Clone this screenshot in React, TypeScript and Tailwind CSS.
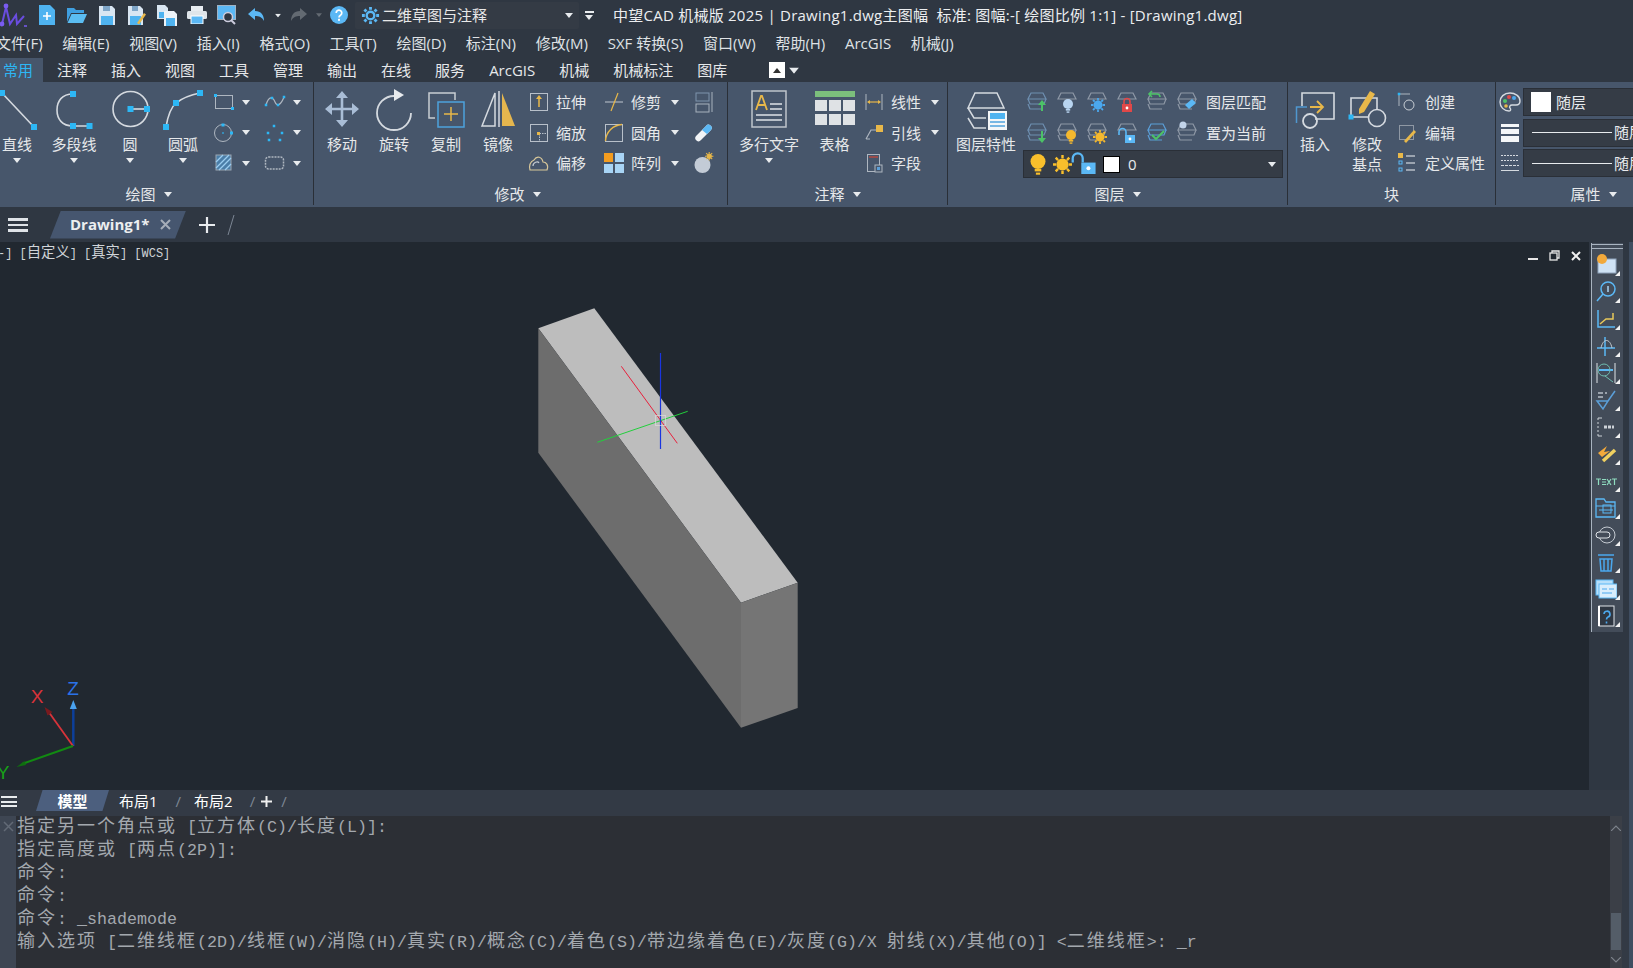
import type { ReactNode } from "react";

const uiFont = { fontFamily: '"Open Sans","Noto Sans CJK SC",sans-serif' };

const menus = ["文件(F)", "编辑(E)", "视图(V)", "插入(I)", "格式(O)", "工具(T)", "绘图(D)", "标注(N)", "修改(M)", "SXF 转换(S)", "窗口(W)", "帮助(H)", "ArcGIS", "机械(J)"];
const tabs = ["注释", "插入", "视图", "工具", "管理", "输出", "在线", "服务", "ArcGIS", "机械", "机械标注", "图库"];

const cmdLines = [
  "指定另一个角点或 [立方体(C)/长度(L)]:",
  "指定高度或 [两点(2P)]:",
  "命令:",
  "命令:",
  "命令: _shademode",
  "输入选项 [二维线框(2D)/线框(W)/消隐(H)/真实(R)/概念(C)/着色(S)/带边缘着色(E)/灰度(G)/X 射线(X)/其他(O)] <二维线框>: _r",
];

const BLUE = "#2db7f5";
const LINE = "#d5dae0";

function Mixed({ text, cjk }: { text: string; cjk: string }) {
  // CJK runs need their own size, the latin part stays on the mono grid
  return (
    <>
      {text.split(/([\u4e00-\u9fff]+)/).map((part, i) =>
        /[\u4e00-\u9fff]/.test(part) ? (
          <span key={i} className={cjk} style={{ fontFamily: '"Noto Sans CJK SC",sans-serif' }}>
            {part}
          </span>
        ) : (
          <span key={i}>{part}</span>
        )
      )}
    </>
  );
}

function Caret({ className = "" }: { className?: string }) {
  return (
    <svg width="8" height="5" viewBox="0 0 8 5" className={"shrink-0 " + className}>
      <path d="M0 0h8L4 5z" fill="#e8ebee" />
    </svg>
  );
}

function Sq({ x, y, s = 6 }: { x: number; y: number; s?: number }) {
  return <rect x={x - s / 2} y={y - s / 2} width={s} height={s} fill={BLUE} />;
}

function Ico({ size = 40, children }: { size?: number; children: ReactNode }) {
  return (
    <svg width={size} height={size} viewBox={`0 0 ${size} ${size}`} fill="none" className="shrink-0 overflow-visible">
      {children}
    </svg>
  );
}

function Panel({ className, label, labelClass = "", caret = true, children }: { className: string; label: string; labelClass?: string; caret?: boolean; children: ReactNode }) {
  return (
    <div className={"flex flex-col shrink-0 h-[123px] overflow-hidden " + className}>
      <div className="flex h-[101px]">{children}</div>
      <div className={"flex h-[22px] items-center justify-center gap-[8px] text-[15px] text-[#e6e8ea] " + labelClass}>
        <span>{label}</span>
        {caret && <Caret />}
      </div>
    </div>
  );
}

function Large({ className, icon, label, caret = true, second }: { className: string; icon: ReactNode; label: string; caret?: boolean; second?: string }) {
  return (
    <div className={"flex flex-col items-center shrink-0 text-[15px] text-[#e6e8ea] " + className}>
      <div className="h-[54px] flex items-center justify-center">{icon}</div>
      <div className="-mt-px h-[20px] leading-[19px] whitespace-nowrap">{label}</div>
      {second && <div className="h-[19px] leading-[19px] whitespace-nowrap">{second}</div>}
      {caret && <Caret className="mt-[3px]" />}
    </div>
  );
}

function Rows({ className = "", children }: { className?: string; children: ReactNode }) {
  return <div className={"flex flex-col pt-[5px] shrink-0 " + className}>{children}</div>;
}

function Small({ icon, label, caret, labelClass = "ml-[2px]" }: { icon: ReactNode; label?: string; caret?: boolean; labelClass?: string }) {
  return (
    <div className="flex h-[30.5px] items-center text-[15px] text-[#e6e8ea] whitespace-nowrap">
      <div className="flex w-[30px] justify-center">{icon}</div>
      {label && <span className={labelClass}>{label}</span>}
      {caret && <Caret className="ml-[10px]" />}
    </div>
  );
}

function DrawCell({ icon }: { icon: ReactNode }) {
  return (
    <div className="flex h-[30.5px] w-[51px] items-center">
      <div className="flex w-[28px] justify-center">{icon}</div>
      <div className="flex w-[16px] justify-center">
        <Caret />
      </div>
    </div>
  );
}

function Layers({ color = "#8e98a6", top = false }: { color?: string; top?: boolean }) {
  return (
    <g stroke={color} strokeWidth="1.2" fill="none">
      <path d="M5 2h12l3 6H2z" />
      {!top && <path d="M2 8l2 5h14l2-5M2 13l2 5h12" />}
    </g>
  );
}

function Mini({ children }: { children: ReactNode }) {
  return (
    <svg width="22" height="22" viewBox="0 0 22 22" fill="none" className="shrink-0 overflow-visible">
      {children}
    </svg>
  );
}

function Bulb({ color, s = 1 }: { color: string; s?: number }) {
  return (
    <g transform={`scale(${s})`}>
      <circle cx="5" cy="5" r="5" fill={color} />
      <rect x="2.8" y="10" width="4.4" height="1.6" fill={color} />
      <rect x="3.6" y="12.4" width="2.8" height="1.4" fill={color} />
    </g>
  );
}

function Sun({ color }: { color: string }) {
  return (
    <g stroke={color} strokeWidth="1.8">
      <circle cx="7" cy="7" r="3.6" fill={color} />
      <path d="M7 0v2.4M7 11.6V14M0 7h2.4M11.6 7H14M2 2l1.7 1.7M10.3 10.3L12 12M12 2l-1.7 1.7M3.7 10.3L2 12" />
    </g>
  );
}

function Lock({ color, open = false }: { color: string; open?: boolean }) {
  return (
    <g>
      <rect x="1" y="6" width="10" height="8" fill={color} />
      <path d={open ? "M-5 6V3a3.5 3.5 0 0 1 7 0v3" : "M3 6V3.5a3 3 0 0 1 6 0V6"} stroke={color} strokeWidth="1.6" fill="none" />
      <circle cx="6" cy="10" r="1.4" fill="#fff" />
    </g>
  );
}

function Side({ children }: { children: ReactNode }) {
  return (
    <div className="relative flex h-[27px] w-full items-center justify-center pr-[3px]">
      <svg width="22" height="22" viewBox="0 0 22 22" fill="none">
        {children}
      </svg>
      <svg width="5" height="5" viewBox="0 0 5 5" className="absolute bottom-[2px] right-[3px]">
        <path d="M5 0v5H0z" fill="#f2f2f2" />
      </svg>
    </div>
  );
}

function QuickBar() {
  return (
    <div className="flex shrink-0 items-center">
      <div className="w-[32px] h-[30px] flex items-center">
        <svg width="30" height="28" viewBox="0 0 30 28" fill="none" className="-ml-[1px]">
          <path d="M3 23L7 6l4 17 6-9 1 9 7-8" stroke="#6a4de0" strokeWidth="2" />
          <circle cx="7" cy="5" r="2.4" fill="#7a5cf0" />
          <circle cx="3" cy="23" r="2.4" fill="#7a5cf0" />
          <path d="M25 25h3" stroke="#7a5cf0" strokeWidth="1.5" />
        </svg>
      </div>
      <div className="flex w-[30px] justify-center">
        <svg width="16" height="20" viewBox="0 0 16 20"><path d="M0 0h11l5 5v15H0z" fill="#4fb3f0" /><path d="M8 7v8M4 11h8" stroke="#fff" strokeWidth="1.6" /></svg>
      </div>
      <div className="flex w-[30px] justify-center">
        <svg width="20" height="18" viewBox="0 0 20 18"><path d="M0 2h7l2 2h8v3H4L0 16z" fill="#3f9fe0" /><path d="M4.5 8H20l-4 9H0.5z" fill="#5bbdf2" /></svg>
      </div>
      <div className="flex w-[30px] justify-center">
        <svg width="16" height="19" viewBox="0 0 16 19"><path d="M0 0h13l3 3v16H0z" fill="#d9e6f2" /><rect x="2" y="10" width="12" height="9" fill="#4fb3f0" /><rect x="4" y="0" width="7" height="5" fill="#7fa6c8" /></svg>
      </div>
      <div className="flex w-[30px] justify-center">
        <svg width="18" height="20" viewBox="0 0 18 20"><path d="M0 1h12l3 3v16H0z" fill="#d9e6f2" /><rect x="2" y="11" width="11" height="9" fill="#4fb3f0" /><rect x="4" y="1" width="6" height="5" fill="#7fa6c8" /><path d="M9 18l7-10 2 1.500-7 10z" fill="#e8b84a" /></svg>
      </div>
      <div className="flex w-[30px] justify-center">
        <svg width="20" height="21" viewBox="0 0 20 21"><path d="M0 0h8l3 3v11H0z" fill="#d9e6f2" /><rect x="2" y="7" width="7" height="6" fill="#4fb3f0" /><path d="M7 6h10l3 3v12H7z" fill="#eef3f8" /><rect x="9" y="13" width="9" height="8" fill="#4fb3f0" /></svg>
      </div>
      <div className="flex w-[30px] justify-center">
        <svg width="20" height="18" viewBox="0 0 20 18"><rect x="4" y="0" width="12" height="5" fill="#e8edf2" /><rect x="0" y="5" width="20" height="8" rx="1.500" fill="#dfe5ea" /><rect x="4" y="10" width="12" height="8" fill="#5bb8f5" stroke="#fff" /></svg>
      </div>
      <div className="flex w-[30px] justify-center">
        <svg width="20" height="20" viewBox="0 0 20 20" fill="none"><rect x="0.500" y="0.500" width="18" height="14" fill="#5bb8f5" stroke="#9fb2c4" /><circle cx="11" cy="12" r="4.500" fill="#2f3742" stroke="#ccd" strokeWidth="1.500" /><path d="M14 15l4 4" stroke="#ccd" strokeWidth="2" /></svg>
      </div>
      <div className="flex w-[30px] justify-center">
        <svg width="18" height="14" viewBox="0 0 18 14" fill="none"><path d="M7 0L0 6l7 6V8c4 0 7 1 9 5 0-6-3-10-9-10z" fill="#5bb8f5" /></svg>
      </div>
      <div className="flex w-[12px] justify-center"><Caret className="scale-75" /></div>
      <div className="flex w-[28px] justify-center">
        <svg width="18" height="14" viewBox="0 0 18 14"><path d="M11 0l7 6-7 6V8C7 8 4 9 2 13 2 7 5 3 11 3z" fill="#636a72" /></svg>
      </div>
      <div className="flex w-[14px] justify-center">
        <svg width="6" height="4" viewBox="0 0 8 5"><path d="M0 0h8L4 5z" fill="#636a72" /></svg>
      </div>
      <div className="flex w-[26px] justify-center">
        <svg width="18" height="18" viewBox="0 0 18 18"><circle cx="9" cy="9" r="9" fill="#5bb8f5" /><path d="M6.200 7a2.800 2.800 0 1 1 4.300 2.300C9.400 10 9 10.500 9 11.500" stroke="#fff" strokeWidth="1.700" fill="none" /><rect x="8" y="12.800" width="2" height="2" fill="#fff" /></svg>
      </div>
      <div className="ml-[3px] flex h-[27px] w-[224px] items-center rounded-[2px] bg-[#343b45] pl-[6px] text-[15px] text-[#e8e8e8]">
        <svg width="19" height="19" viewBox="0 0 20 20" fill="none" stroke="#5bb8f5" className="shrink-0">
          <circle cx="10" cy="10" r="4" strokeWidth="2.500" />
          <path d="M10 1v3M10 16v3M1 10h3M16 10h3M3.600 3.600l2.100 2.100M14.300 14.300l2.100 2.100M16.400 3.600l-2.100 2.100M5.700 14.300l-2.100 2.100" strokeWidth="3" />
        </svg>
        <span className="ml-[2px] whitespace-nowrap">二维草图与注释</span>
        <Caret className="ml-auto mr-[6px]" />
      </div>
      <div className="flex w-[20px] flex-col items-center gap-[2px]">
        <div className="h-[2px] w-[9px] bg-[#e8ebee]" />
        <Caret />
      </div>
    </div>
  );
}

function DrawPanel() {
  return (
    <Panel className="w-[314px] border-r border-[#2a2f37]" label="绘图" labelClass="pr-[16px]">
      <Large className="w-[54px] -ml-[10px]" label="直线" icon={
        <Ico>
          <path d="M5 4L37 38" stroke={LINE} strokeWidth="1.600" />
          <Sq x={5} y={4} /><Sq x={37} y={38} />
        </Ico>
      } />
      <Large className="w-[60px]" label="多段线" icon={
        <Ico>
          <path d="M19 5C8 5 3 12 3 21C3 30 8 37 19 37H35" stroke={LINE} strokeWidth="1.600" />
          <Sq x={19} y={5} /><Sq x={19} y={37} /><Sq x={35.5} y={37} />
        </Ico>
      } />
      <Large className="w-[52px]" label="圆" icon={
        <Ico>
          <circle cx="20.500" cy="20" r="17.500" stroke={LINE} strokeWidth="1.600" />
          <path d="M20 20H37" stroke={LINE} strokeWidth="1.600" />
          <Sq x={20.5} y={20} /><Sq x={37} y={20} />
        </Ico>
      } />
      <Large className="w-[54px]" label="圆弧" icon={
        <Ico>
          <path d="M3 38Q6 20 13 14Q22 7 37 4" stroke={LINE} strokeWidth="1.600" />
          <Sq x={3} y={38} /><Sq x={13} y={14} /><Sq x={37} y={4} />
        </Ico>
      } />
      <Rows>
        <DrawCell icon={<Mini><rect x="2.500" y="4.500" width="17" height="13" stroke="#aeb6c0" /><Sq x={2.5} y={4.5} s={3} /><Sq x={19.5} y={17.5} s={3} /></Mini>} />
        <DrawCell icon={<Mini><circle cx="10" cy="11" r="8.500" stroke="#aeb6c0" /><Sq x={10} y={3} s={3} /><Sq x={18.5} y={11} s={3} /><Sq x={10} y={11} s={1.5} /></Mini>} />
        <DrawCell icon={<Mini><rect x="3" y="3" width="15" height="15" fill="#4b7ea8" stroke="#9aa5b2" /><path d="M3 10L10 3M3 16L16 3M6 18L18 6M12 18l6-6" stroke="#9ccdf0" strokeWidth="1.300" /></Mini>} />
      </Rows>
      <Rows>
        <DrawCell icon={<Mini><path d="M2 14C5 4 9 6 11 11C13 16 17 14 20 6" stroke="#aeb6c0" strokeWidth="1.200" /><Sq x={2} y={14} s={2.5} /><Sq x={8} y={7} s={2.5} /><Sq x={14} y={14} s={2.5} /><Sq x={20} y={6} s={2.5} /></Mini>} />
        <DrawCell icon={<Mini><Sq x={10} y={4} s={2.5} /><Sq x={4} y={11} s={2.5} /><Sq x={18} y={11} s={2.5} /><Sq x={5} y={18} s={2.5} /><Sq x={16} y={18} s={2.5} /></Mini>} />
        <DrawCell icon={<Mini><rect x="1.500" y="5" width="18" height="12" rx="3" stroke="#aeb6c0" strokeWidth="1.500" strokeDasharray="2 1" /></Mini>} />
      </Rows>
    </Panel>
  );
}

function ModifyPanel() {
  return (
    <Panel className="w-[414px] border-r border-[#2a2f37]" label="修改" labelClass="pr-[6px]">
      <Large className="w-[52px] ml-[2px]" caret={false} label="移动" icon={
        <Ico>
          <path d="M20 8V32M8 20H32" stroke="#a9bdd6" strokeWidth="2.600" />
          <path d="M20 2l6 7H14zM20 38l6-7H14zM3 20l7-6v12zM37 20l-7-6v12z" fill="#a9bdd6" />
        </Ico>
      } />
      <Large className="w-[52px]" caret={false} label="旋转" icon={
        <Ico>
          <path d="M20 7A17 17 0 1 0 37 24" stroke={LINE} strokeWidth="1.800" />
          <path d="M20 0L30 6L20 12z" fill="#e8ebee" />
        </Ico>
      } />
      <Large className="w-[52px]" caret={false} label="复制" icon={
        <Ico>
          <path d="M9 29H3V4H29V11" stroke="#c9ced4" strokeWidth="1.500" />
          <rect x="12" y="13" width="26" height="25" stroke="#4da3dd" strokeWidth="1.500" />
          <path d="M25 18V32M18 25H32" stroke="#e8b84a" strokeWidth="1.500" />
        </Ico>
      } />
      <Large className="w-[52px]" caret={false} label="镜像" icon={
        <Ico>
          <path d="M17 4L4 37H17z" stroke={LINE} strokeWidth="1.500" />
          <path d="M21 2V38" stroke={LINE} strokeWidth="1.500" />
          <path d="M24 4L37 37H24z" fill="#e5b64e" />
        </Ico>
      } />
      <Rows className="w-[75px]">
        <Small label="拉伸" icon={<Mini><rect x="2.500" y="2.500" width="17" height="17" stroke="#b8c0ca" /><path d="M11 6V16" stroke="#e8b84a" strokeWidth="1.500" /><path d="M11 4l3 4H8z" fill="#e8b84a" /></Mini>} />
        <Small label="缩放" icon={<Mini><rect x="2.500" y="2.500" width="17" height="17" stroke="#b8c0ca" /><rect x="11.500" y="11.500" width="8" height="8" stroke="#b8c0ca" strokeDasharray="1.500 1" /><rect x="9" y="10" width="3" height="3" fill="#e8b84a" /></Mini>} />
        <Small label="偏移" icon={<Mini><path d="M2 18H19C21 13 18 10 15 10C14 5 9 3 6 8C2 10 1 14 2 18z" stroke="#d8c79a" strokeWidth="1.200" /><path d="M5 14C5 10 10 9 11 11" stroke="#c5cbd2" strokeWidth="1.200" /></Mini>} />
      </Rows>
      <Rows className="w-[90px]">
        <Small label="修剪" caret icon={<Mini><path d="M2 11H20" stroke="#aeb6c0" strokeWidth="1.200" /><path d="M15 2L8 20" stroke="#e8b84a" strokeWidth="1.200" /></Mini>} />
        <Small label="圆角" caret icon={<Mini><rect x="2.500" y="2.500" width="17" height="17" stroke="#b8c0ca" /><path d="M2.500 19C3 10 10 3 19 2.500" stroke="#e8b84a" strokeWidth="1.400" /></Mini>} />
        <Small label="阵列" caret icon={<Mini><rect x="1" y="1" width="9" height="9" fill="#f39c1f" /><rect x="12" y="1" width="9" height="9" fill="#a8d4f5" /><rect x="1" y="12" width="9" height="9" fill="#a8d4f5" /><rect x="12" y="12" width="9" height="9" fill="#a8d4f5" /></Mini>} />
      </Rows>
      <Rows className="w-[30px]">
        <Small icon={<Mini><rect x="3" y="2" width="13" height="8" stroke="#7f94ad" /><rect x="3" y="13" width="13" height="8" stroke="#a8b2be" /><path d="M19 1V21" stroke="#a8b2be" /></Mini>} />
        <Small icon={<Mini><path d="M3 14L13 4a3 3 0 0 1 5 4L8 18a3 3 0 0 1-5-4z" fill="#f2f4f6" /><path d="M9 8L13 4a3 3 0 0 1 5 4L14 12z" fill="#5bb8f5" /></Mini>} />
        <Small icon={<Mini><circle cx="9.500" cy="13" r="8" fill="#c3cbd6" /><g transform="translate(12 0) scale(.6)"><Sun color="#e8b84a" /></g></Mini>} />
      </Rows>
    </Panel>
  );
}

function AnnotatePanel() {
  return (
    <Panel className="w-[220px] border-r border-[#2a2f37]" label="注释">
      <Large className="w-[82px]" label="多行文字" icon={
        <Ico>
          <rect x="3" y="2" width="34" height="36" stroke="#bfc5cc" strokeWidth="1.500" />
          <path d="M7 21L12 7h1l5 14M9 16h7" stroke="#e8b84a" strokeWidth="1.800" />
          <path d="M21 15h12M21 20h12M7 26h26M7 31h26" stroke="#b8bfc8" strokeWidth="1.800" />
        </Ico>
      } />
      <Large className="w-[49px]" caret={false} label="表格" icon={
        <Ico>
          <rect x="0" y="2" width="40" height="6" fill="#7cbf7c" />
          <path d="M0 11h12v11H0zM14 11h12v11H14zM28 11h12v11H28zM0 25h12v11H0zM14 25h12v11H14zM28 25h12v11H28z" fill="#dfe2e5" />
        </Ico>
      } />
      <Rows>
        <Small label="线性" caret icon={<Mini><path d="M3 3V19M19 3V19" stroke="#aeb6c0" /><path d="M5 11H17" stroke="#e8b84a" strokeWidth="1.200" /><path d="M4 11l3-2v4zM18 11l-3-2v4z" fill="#e8b84a" /></Mini>} />
        <Small label="引线" caret icon={<Mini><path d="M3 17L8 8H13M3 17H7" stroke="#aeb6c0" strokeWidth="1.200" /><rect x="13" y="3" width="7" height="7" fill="#e8b84a" /></Mini>} />
        <Small label="字段" icon={<Mini><rect x="4.500" y="2.500" width="12" height="17" stroke="#aeb6c0" /><path d="M6 5h9" stroke="#b5483f" strokeWidth="1.500" /><rect x="12" y="13" width="7" height="7" fill="#47566b" stroke="#aeb6c0" /><rect x="14" y="15" width="3" height="3" fill="#5b9fd8" /></Mini>} />
      </Rows>
    </Panel>
  );
}

function LayerPanel() {
  const row1 = [
    <><Layers color="#6e8fb0" /><path d="M16 20V13" stroke="#4cc267" strokeWidth="2" /><path d="M16 9l4 5h-8z" fill="#4cc267" /></>,
    <><Layers top /><g transform="translate(7 8)"><Bulb color="#b8d4f0" /></g></>,
    <><Layers top /><g transform="translate(5 7)"><Sun color="#4ba8ee" /></g></>,
    <><Layers top /><g transform="translate(5 7)"><Lock color="#e04848" /></g></>,
    <><Layers /><path d="M6 0L3 3l3 3M3 3h8a3 3 0 0 1 3 3" stroke="#4cc267" strokeWidth="1.600" /></>,
    <><Layers /><path d="M9 14L16 8l4 4-7 6z" fill="#5bb8f5" /></>,
  ];
  const row2 = [
    <><Layers color="#6e8fb0" /><path d="M16 9V16" stroke="#4cc267" strokeWidth="2" /><path d="M16 21l4-5h-8z" fill="#4cc267" /></>,
    <><Layers /><g transform="translate(10 8)"><Bulb color="#f4b82e" /></g></>,
    <><Layers /><g transform="translate(7 8)"><Sun color="#f4b82e" /></g></>,
    <><Layers top /><g transform="translate(8 7)"><Lock color="#5bb8f5" open /></g></>,
    <><Layers color="#5b9fd8" /><path d="M6 13l4 4 8-8" stroke="#4cc267" strokeWidth="2" /></>,
    <><Layers /><circle cx="7" cy="3" r="3.500" fill="#c2d4ea" /></>,
  ];
  return (
    <Panel className="w-[340px] border-r border-[#2a2f37]" label="图层">
      <Large className="w-[76px]" caret={false} label="图层特性" icon={
        <Ico>
          <path d="M9 4H31L38 19H2zM2 19L8 29H20M2 29L8 39H20" stroke={LINE} strokeWidth="1.500" />
          <rect x="22" y="22" width="19" height="19" fill="#f4f6f8" />
          <rect x="24" y="24" width="15" height="6" fill="#4fb3f0" />
          <path d="M24 33h15M24 37h15" stroke="#4fa3dd" strokeWidth="1.400" />
        </Ico>
      } />
      <div className="-ml-[2px] flex flex-col pt-[5px]">
        {[row1, row2].map((row, r) => (
          <div key={r} className="flex h-[30.5px] items-center text-[15px] text-[#e6e8ea]">
            {row.map((ic, i) => (
              <div key={i} className="flex w-[30px] justify-center">
                <Mini>{ic}</Mini>
              </div>
            ))}
            <span className="ml-[4px] whitespace-nowrap">{r === 0 ? "图层匹配" : "置为当前"}</span>
          </div>
        ))}
        <div className="ml-[1px] mt-[2px] flex h-[28px] w-[260px] items-center border border-[#2a2f37] bg-[#353c46] text-[15px] text-[#e8ebee]">
          <svg width="16" height="21" viewBox="0 0 10 14" className="ml-[6px] shrink-0"><Bulb color="#f9bf2c" /></svg>
          <svg width="19" height="19" viewBox="0 0 14 14" className="ml-[7px] shrink-0 overflow-visible"><Sun color="#f9bf2c" /></svg>
          <svg width="20" height="20" viewBox="0 0 14 14" className="ml-[5px] shrink-0 overflow-visible"><g transform="translate(2 0)"><Lock color="#5bb8f5" open /></g></svg>
          <div className="ml-[6px] h-[17px] w-[17px] shrink-0 border border-black bg-white" />
          <span className="ml-[8px]">0</span>
          <Caret className="ml-auto mr-[6px]" />
        </div>
      </div>
    </Panel>
  );
}

function BlockPanel() {
  return (
    <Panel className="w-[208px] border-r border-[#2a2f37]" label="块" caret={false}>
      <Large className="w-[54px]" caret={false} label="插入" icon={
        <Ico>
          <path d="M7 17V4H39V30H20" stroke={LINE} strokeWidth="1.600" />
          <path d="M12 18H1.500V34" stroke="#4f97cf" strokeWidth="1.500" />
          <circle cx="15" cy="32" r="7" stroke={LINE} strokeWidth="1.800" />
          <path d="M15 18H27M22 12l6 6-6 6" stroke="#e8b84a" strokeWidth="1.800" />
        </Ico>
      } />
      <Large className="w-[50px]" caret={false} label="修改" second="基点" icon={
        <Ico>
          <path d="M4 9H30V28H4z" stroke={LINE} strokeWidth="1.600" />
          <circle cx="30" cy="29" r="8.500" stroke={LINE} strokeWidth="1.600" fill="#47566b" />
          <path d="M12 20L23 2l5 3-11 18-5 2z" fill="#e8b84a" />
          <Sq x={4} y={28} s={5} />
        </Ico>
      } />
      <Rows>
        <Small label="创建" labelClass="ml-[3px]" icon={<Mini><path d="M3 15V3H14" stroke="#aeb6c0" /><Sq x={3} y={3} s={2.5} /><circle cx="13" cy="14" r="5" stroke="#c8ced5" /></Mini>} />
        <Small label="编辑" labelClass="ml-[3px]" icon={<Mini><rect x="3.500" y="3.500" width="14" height="14" stroke="#8f98a4" /><path d="M8 19l10-11 2 2-10 11z" fill="#e8b84a" /></Mini>} />
        <Small label="定义属性" labelClass="ml-[3px]" icon={<Mini><rect x="2" y="1" width="5" height="5" fill="#e8b84a" /><rect x="3" y="9" width="3" height="3" stroke="#5bb8f5" /><rect x="3" y="16" width="3" height="3" stroke="#5bb8f5" /><path d="M10 4h9M10 11h9M10 18h9" stroke="#b8bfc8" strokeWidth="1.400" /></Mini>} />
      </Rows>
    </Panel>
  );
}

function PropsPanel() {
  return (
    <Panel className="w-[137px]" label="属性" labelClass="pl-[58px]">
      <div className="flex w-[27px] shrink-0 flex-col items-center gap-[12px] pt-[10px]">
        <svg width="22" height="20" viewBox="0 0 22 20" fill="none" className="shrink-0">
          <path d="M11 1C5 1 1 5 1 10s4 9 9 9c2 0 2-2 1-3s0-3 2-3h4c3 0 4-2 4-4C21 4 16 1 11 1z" stroke="#d5dae0" strokeWidth="1.400" />
          <circle cx="6" cy="9" r="2" fill="#4cc267" /><circle cx="10" cy="5" r="2" fill="#e04848" /><circle cx="15" cy="6" r="2" fill="#4ba8ee" /><circle cx="7" cy="14" r="1.800" fill="#e8b84a" />
        </svg>
        <svg width="18" height="18" viewBox="0 0 18 18" className="shrink-0"><path d="M0 0h18v3H0zM0 5h18v5H0zM0 12h18v6H0z" fill="#f4f6f8" /></svg>
        <svg width="18" height="18" viewBox="0 0 18 18" stroke="#d5dae0" strokeWidth="1" className="shrink-0"><path d="M0 1.500h18M0 6.500h18" strokeDasharray="2 1" /><path d="M0 11.500h18" strokeDasharray="3 1" /><path d="M0 16.500h18" /></svg>
      </div>
      <div className="flex shrink-0 flex-col gap-[2.500px] pt-[6px] text-[15px] text-[#e8ebee]">
        <div className="flex h-[28px] w-[130px] items-center border border-[#2a2f37] bg-[#353c46] pl-[7px]">
          <div className="h-[20px] w-[20px] shrink-0 bg-white" />
          <span className="ml-[5px]">随层</span>
        </div>
        {[0, 1].map((n) => (
          <div key={n} className="flex h-[28px] w-[130px] items-center border border-[#2a2f37] bg-[#353c46] pl-[8px]">
            <div className="h-px w-[80px] shrink-0 bg-[#e8ebee]" />
            <span className="ml-[2px] whitespace-nowrap">随层</span>
          </div>
        ))}
      </div>
    </Panel>
  );
}

function SideToolbar() {
  return (
    <div className="mt-px ml-[2px] flex h-[389px] w-[32px] flex-col border-l border-[#a9b4c0] bg-[#434c59]">
      <div className="mt-px h-[5px] w-[31px] border-y border-[#a9b4c0]" />
      <div className="h-[2px]" />
      <Side><rect x="3" y="5" width="18" height="14" fill="#cfe2f4" stroke="#8fa3bb" /><circle cx="7" cy="5" r="5" fill="#f2a93b" /></Side>
      <Side><circle cx="13" cy="8" r="7" stroke="#5bb8f5" strokeWidth="1.500" /><path d="M8 13L2 20" stroke="#5bb8f5" strokeWidth="1.500" /><path d="M13 5v6" stroke="#a8d4f5" strokeWidth="1.500" /></Side>
      <Side><path d="M3 2V19H20" stroke="#5bb8f5" strokeWidth="1.500" /><path d="M5 16l6-5h7V5" stroke="#e8c85a" strokeWidth="1.500" /></Side>
      <Side><path d="M2 13H20M10 2V21" stroke="#5bb8f5" strokeWidth="1.500" /><path d="M6 13C8 3 15 3 17 13" stroke="#c5cbd2" /></Side>
      <Side><path d="M2 1V21M20 1V21" stroke="#dfe3e8" /><path d="M4 8H18" stroke="#5bb8f5" strokeWidth="2" /><circle cx="9" cy="8" r="6" stroke="#6fbcb0" /><path d="M10 14l8 6" stroke="#6fbcb0" /></Side>
      <Side><path d="M2 12H13L8 20zM13 12L20 2" stroke="#5b9fd8" strokeWidth="1.500" /><path d="M3 4h5M3 8h5M10 4h2" stroke="#b8bfc8" strokeWidth="1.500" /></Side>
      <Side><path d="M3 2V20" stroke="#cdd2d8" strokeDasharray="2 2" /><path d="M3 2h4M3 20h4" stroke="#cdd2d8" /><path d="M9 11h10" stroke="#cdd2d8" strokeWidth="3" strokeDasharray="3 1" /></Side>
      <Side><path d="M3 10L12 3l-3 6 6-1-8 6z" fill="#f2a93b" /><path d="M8 18L20 7" stroke="#f0d060" strokeWidth="3.500" /></Side>
      <Side><path d="M1 9h5M3.500 9v6M7 12h4M7 9.500h4M7 14.500h4M12 9l4 6M16 9l-4 6M17 9h5M19.500 9v6" stroke="#8fdcc0" strokeWidth="1.200" /></Side>
      <Side><path d="M1 20V2H9l2 3H20V20z" stroke="#5bb8f5" strokeWidth="1.300" /><path d="M1 9H20M4 13H18" stroke="#5bb8f5" /><rect x="8" y="8" width="8" height="8" stroke="#5bb8f5" /></Side>
      <Side><circle cx="12" cy="11" r="8" stroke="#c5cbd2" /><rect x="1" y="8" width="14" height="6" rx="3" stroke="#dfe3e8" fill="#434c59" /></Side>
      <Side><path d="M3 4H19M5 8H17L16 20H6zM9 8V20M13 8V20" stroke="#4ba8ee" strokeWidth="1.500" /></Side>
      <Side><rect x="1" y="2" width="17" height="15" fill="#b8e0fa" stroke="#5bb8f5" /><rect x="4" y="6" width="18" height="14" fill="#d9eefc" stroke="#5bb8f5" /><path d="M7 11h5M14 11h5M7 15h10" stroke="#4ba8ee" /></Side>
      <Side><rect x="4" y="1" width="15" height="20" stroke="#dfe3e8" fill="#2f3742" /><path d="M4 1v20" stroke="#fff" strokeWidth="2" /><path d="M9 9a3 3 0 1 1 4 3c-1 .5-1.500 1-1.500 2.500M11.500 16.500v2" stroke="#4ba8ee" strokeWidth="1.600" /></Side>
    </div>
  );
}

function Viewport() {
  return (
    <div className="relative h-[548px] w-[1589px] shrink-0 overflow-hidden bg-[#212830]">
      <svg width="1589" height="548" viewBox="0 242 1589 548" className="absolute inset-0">
        <polygon points="538.3,328.3 594.3,308.3 797.7,582.7 741,602.7" fill="#bdbdbd" />
        <polygon points="538.3,328.3 741,602.7 741,727.7 538.3,452.7" fill="#6d6d6d" />
        <polygon points="741,602.7 797.7,582.7 797.7,708 741,727.7" fill="#757575" />
        <line x1="621.3" y1="366.3" x2="677.3" y2="443.3" stroke="#e8203c" />
        <line x1="597.3" y1="442.3" x2="687.7" y2="411.3" stroke="#22d03c" />
        <line x1="660.5" y1="353" x2="660.5" y2="449" stroke="#1a35e0" strokeWidth="1.200" />
        <rect x="655.5" y="415.500" width="10" height="10" fill="none" stroke="#dcdcdc" strokeOpacity="0.700" />
        <line x1="73.3" y1="746" x2="73.3" y2="706" stroke="#0d3f9a" strokeWidth="2.500" />
        <path d="M73.300 700l3.500 9h-7z" fill="#4aa3f0" />
        <line x1="73" y1="746" x2="48" y2="711" stroke="#d8333a" strokeWidth="1.800" />
        <path d="M44.500 707l8 5-5 3.500z" fill="#7a1a1e" />
        <line x1="73" y1="746" x2="22" y2="764" stroke="#128a12" strokeWidth="2" />
        <path d="M16.500 767l8-6 1.500 4z" fill="#0f6f0f" />
        <text x="73" y="695" textAnchor="middle" fontSize="19" fill="#2a72e8" fontFamily="Liberation Sans">Z</text>
        <text x="37" y="703" textAnchor="middle" fontSize="19" fill="#d8333a" fontFamily="Liberation Sans">X</text>
        <text x="3" y="779" textAnchor="middle" fontSize="19" fill="#18a018" fontFamily="Liberation Sans">Y</text>
      </svg>
      <div className="absolute left-[-2px] top-0 whitespace-pre text-[12px] leading-[18px] text-[#d0d4d8]" style={{ fontFamily: '"Liberation Mono",monospace' }}>
        <Mixed text="-] [自定义] [真实] [WCS]" cjk="text-[14.300px]" />
      </div>
      <div className="absolute right-[8px] top-[8px] flex items-center gap-[11px]">
        <div className="mt-[7px] h-[2px] w-[10px] bg-[#e6e6e6]" />
        <svg width="11" height="11" viewBox="0 0 11 11" fill="none" stroke="#e6e6e6" strokeWidth="1.300"><rect x="1" y="3" width="7" height="7" /><path d="M3 3V1h7v7H8" /></svg>
        <svg width="10" height="10" viewBox="0 0 10 10" stroke="#f0f0f0" strokeWidth="2"><path d="M1 1l8 8M9 1l-8 8" /></svg>
      </div>
    </div>
  );
}

function LayoutTabs() {
  return (
    <div className="flex h-[26px] items-start bg-[#333a45] text-[15px] leading-[22px] text-white">
      <div className="ml-[1px] mt-[6px] flex w-[16px] flex-col gap-[2.500px]">
        <div className="h-[2px] bg-[#e8ebee]" />
        <div className="h-[2px] bg-[#e8ebee]" />
        <div className="h-[2px] bg-[#e8ebee]" />
      </div>
      <div className="ml-[19px] flex h-[21px] w-[73px] items-center justify-center bg-[#4c5f7e] font-bold [clip-path:polygon(9%_0,100%_0,91%_100%,0_100%)]">模型</div>
      <span className="ml-[10px]">布局1</span>
      <span className="ml-[18px] text-[#7d8794]">/</span>
      <span className="ml-[13px]">布局2</span>
      <span className="ml-[17px] text-[#7d8794]">/</span>
      <svg width="11" height="11" viewBox="0 0 11 11" stroke="#f0f0f0" strokeWidth="2" className="ml-[6px] mt-[6px]"><path d="M5.500 0v11M0 5.500h11" /></svg>
      <span className="ml-[9px] text-[#7d8794]">/</span>
    </div>
  );
}

function CommandArea() {
  return (
    <div className="flex h-[152px] bg-[#2c2f35]">
      <div className="flex w-[16px] shrink-0 justify-center bg-[#3e4653] pt-[5px]">
        <svg width="11" height="11" viewBox="0 0 11 11" stroke="#626a76" strokeWidth="1.500"><path d="M1 1l9 9M10 1l-9 9" /></svg>
      </div>
      <div className="-mt-[3px] flex-1 overflow-hidden pl-px text-[16.670px] leading-[23px] text-[#a3a8ae]" style={{ fontFamily: '"Liberation Mono",monospace' }}>
        {cmdLines.map((line, i) => (
          <div key={i} className="h-[23px] whitespace-pre">
            <Mixed text={line} cjk="text-[18px] tracking-[2px]" />
          </div>
        ))}
      </div>
      <div className="relative w-[12px] shrink-0 bg-[#3b3f47]">
        <svg width="10" height="6" viewBox="0 0 10 6" fill="none" stroke="#7d838c" strokeWidth="1.200" className="absolute left-px top-[9px]"><path d="M0 6l5-5 5 5" /></svg>
        <div className="absolute left-px top-[97px] h-[37px] w-[10px] bg-[#545d68]" />
        <svg width="10" height="6" viewBox="0 0 10 6" fill="none" stroke="#7d838c" strokeWidth="1.200" className="absolute left-px top-[141px]"><path d="M0 0l5 5 5-5" /></svg>
      </div>
      <div className="w-[7px] shrink-0 bg-[#333a45]" />
    </div>
  );
}

export default function App() {
  return (
    <div className="h-[968px] w-[1633px] overflow-hidden bg-[#2f3742]" style={uiFont}>
      <div className="flex h-[30px] items-center">
        <QuickBar />
        <span className="ml-[14px] whitespace-nowrap text-[15px] tracking-[0.24px] text-[#eceef0]">中望CAD 机械版 2025 | Drawing1.dwg主图幅&nbsp; 标准: 图幅:-[ 绘图比例 1:1] - [Drawing1.dwg]</span>
      </div>
      <div className="-ml-[4px] flex h-[28px] items-center gap-[19.700px] pb-[2px] text-[15px] text-[#dfe2e5] whitespace-nowrap">
        {menus.map((m) => (
          <span key={m}>{m}</span>
        ))}
      </div>
      <div className="flex h-[24px] items-center text-[15px] text-[#e6e8ea] whitespace-nowrap">
        <div className="flex h-full w-[43px] items-center bg-[#47566b] pl-[3px] text-[#2db7f5]">常用</div>
        <div className="ml-[14px] flex gap-[24px]">
          {tabs.map((t) => (
            <span key={t}>{t}</span>
          ))}
        </div>
        <div className="ml-[42px] flex h-[16px] w-[16px] items-center justify-center bg-white">
          <svg width="8" height="5" viewBox="0 0 8 5"><path d="M0 5h8L4 0z" fill="#333" /></svg>
        </div>
        <Caret className="ml-[5px] scale-125" />
      </div>
      <div className="h-[125px] bg-[#47566b]">
        <div className="flex h-[123px]">
          <DrawPanel />
          <ModifyPanel />
          <AnnotatePanel />
          <LayerPanel />
          <BlockPanel />
          <PropsPanel />
        </div>
      </div>
      <div className="flex h-[35px] items-center">
        <div className="ml-[8px] flex w-[20px] flex-col gap-[3px]">
          <div className="h-[3px] bg-[#dfe3e8]" />
          <div className="h-[2px] bg-[#dfe3e8]" />
          <div className="h-[3px] bg-[#dfe3e8]" />
        </div>
        <div className="ml-[22px] flex h-[28px] w-[136px] items-center bg-[#46566f] pl-[20px] text-[15px] font-bold text-[#eceef0] [clip-path:polygon(8%_0,100%_0,92%_100%,0_100%)]">
          Drawing1*
          <svg width="11" height="11" viewBox="0 0 11 11" stroke="#a5adb8" strokeWidth="2" className="ml-[11px] shrink-0"><path d="M1 1l9 9M10 1l-9 9" /></svg>
        </div>
        <svg width="16" height="16" viewBox="0 0 16 16" stroke="#e8ebee" strokeWidth="2.200" className="ml-[13px]"><path d="M8 0v16M0 8h16" /></svg>
        <svg width="8" height="20" viewBox="0 0 8 20" stroke="#7d8794" className="ml-[12px]"><path d="M7 0L1 20" /></svg>
      </div>
      <div className="flex h-[726px]">
        <div className="flex w-[1629px] flex-col">
          <div className="flex h-[548px]">
            <Viewport />
            <SideToolbar />
          </div>
          <LayoutTabs />
          <CommandArea />
        </div>
        <div className="w-[4px] bg-[#3f4d60]" />
      </div>
    </div>
  );
}
